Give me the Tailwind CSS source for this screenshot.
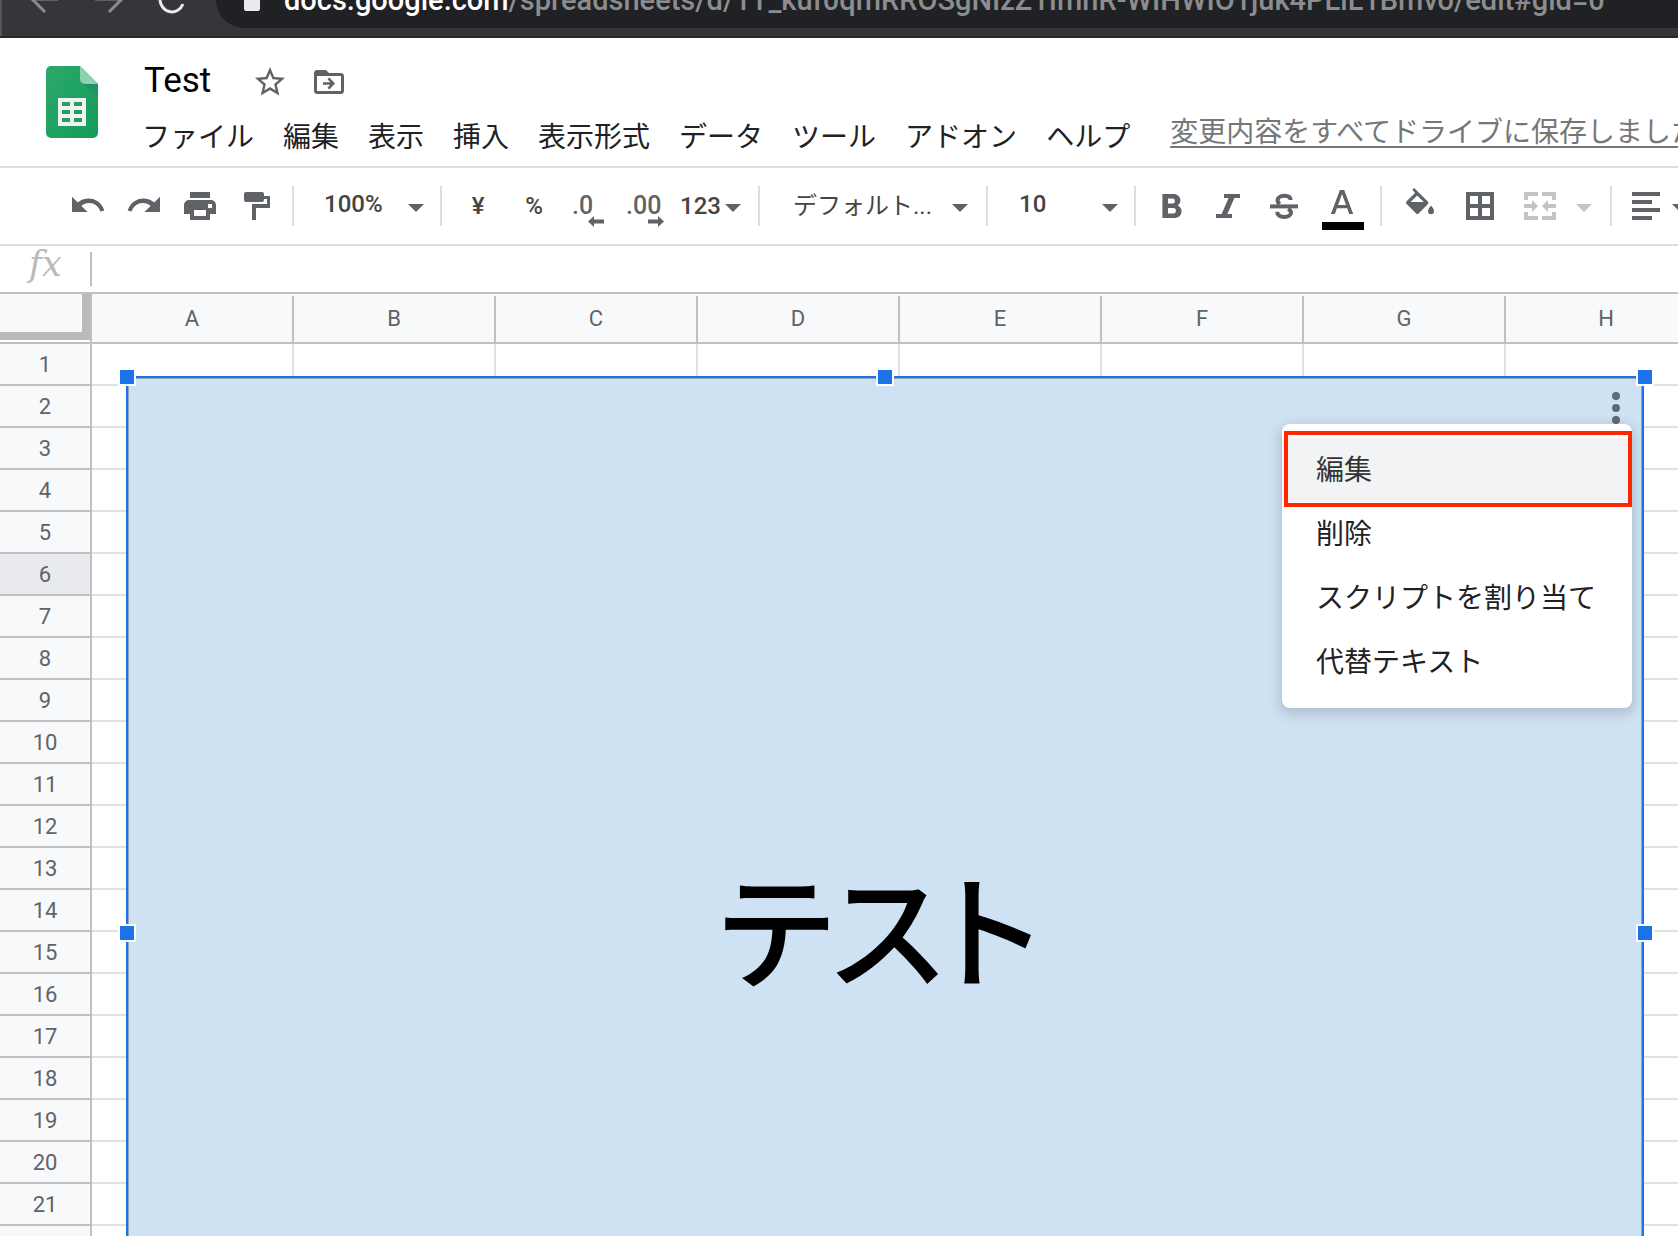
<!DOCTYPE html>
<html lang="ja">
<head>
<meta charset="utf-8">
<title>Test - スプレッドシート</title>
<script src="https://cdn.jsdelivr.net/npm/@tailwindcss/browser@4"></script>
</head>
<body class="flex h-screen flex-col overflow-hidden bg-white font-[Roboto,'Noto_Sans_CJK_JP',sans-serif] text-[#202124]">

<!-- Browser address bar -->
<div class="flex h-[38px] shrink-0 items-start overflow-hidden border-b-2 border-[#28292a] bg-[#35363a]">
  <div class="flex h-9 w-[216px] shrink-0 items-start border-l-2 border-[#55565a]">
    <button type="button" aria-label="戻る" class="ml-[28px] h-4 w-8">
      <svg class="h-4 w-8" viewBox="0 0 32 16" fill="none" stroke="#8a8b8d" stroke-width="3"><path d="M28 -1H2M1 -2L15 12"/></svg>
    </button>
    <button type="button" aria-label="進む" class="ml-[32px] h-4 w-8">
      <svg class="h-4 w-8" viewBox="0 0 32 16" fill="none" stroke="#8a8b8d" stroke-width="3"><path d="M1 -1H27M29 -2L15 12"/></svg>
    </button>
    <button type="button" aria-label="再読み込み" class="ml-[30px] h-4 w-8">
      <svg class="h-4 w-8" viewBox="0 0 32 16" fill="none" stroke="#e8eaed" stroke-width="3"><path d="M4 -2A12 13 0 0 0 27 4"/></svg>
    </button>
  </div>
  <div class="flex h-7 grow items-start rounded-bl-[28px] bg-[#202124] pl-[28px]">
    <svg class="h-3 w-4 shrink-0" viewBox="0 0 16 12" fill="#e8eaed"><path d="M0 0H16V9a2 2 0 0 1-2 2H2a2 2 0 0 1-2-2z"/></svg>
    <p class="-mt-[16px] ml-[24px] whitespace-nowrap text-[29px] font-medium leading-8 text-[#8c8d8f]"><span class="text-white">docs.google.com</span>/spreadsheets/d/1T_kuf0qmRROSgNIzZ1ImnR-WIHWIO1juk4PLiL1Bmvo/edit#gid=0</p>
  </div>
</div>

<!-- Document header -->
<header class="flex h-[130px] shrink-0 overflow-hidden border-b-2 border-[#dadce0]">
  <a href="#" aria-label="スプレッドシート ホーム" class="ml-[46px] mt-[28px] h-[72px] w-[52px] shrink-0">
    <svg class="h-[72px] w-[52px]" viewBox="0 0 52 72">
      <defs>
        <linearGradient id="sheet" x1="0" y1="0" x2="1" y2="1"><stop offset="0" stop-color="#2ba96a"/><stop offset="1" stop-color="#149b5a"/></linearGradient>
        <linearGradient id="fold" x1="0" y1="0" x2="1" y2="1"><stop offset="0" stop-color="#1b8e63"/><stop offset="1" stop-color="#1b8e63" stop-opacity="0.4"/></linearGradient>
      </defs>
      <path fill="url(#sheet)" d="M5 0H34L52 18V67a5 5 0 0 1-5 5H5a5 5 0 0 1-5-5V5a5 5 0 0 1 5-5z"/>
      <path fill="url(#fold)" d="M36 17L52 30V18z"/>
      <path fill="#8ed1b1" d="M34 0L52 18H39a5 5 0 0 1-5-5z"/>
      <path fill="#f1f1f1" fill-rule="evenodd" d="M12 32H40V60H12zM16 36V40H24V36zM28 36V40H36V36zM16 44V48H24V44zM28 44V48H36V44zM16 52V56H24V52zM28 52V56H36V52z"/>
    </svg>
  </a>
  <div class="ml-[44px] shrink-0">
    <div class="flex items-start pt-[25px]">
      <input aria-label="ドキュメント名" value="Test" class="h-9 w-[110px] bg-transparent pl-[2px] text-[35px] leading-9 text-black outline-none">
      <button type="button" aria-label="スターを付ける" class="mt-px h-9 w-9"><svg class="h-9 w-9" viewBox="0 0 24 24" fill="#5f6368"><path d="M22 9.24l-7.19-.62L12 2 9.19 8.63 2 9.24l5.46 4.73L5.82 21 12 17.27 18.18 21l-1.63-7.03L22 9.24zM12 15.4l-3.76 2.27 1-4.28-3.32-2.88 4.38-.38L12 6.1l1.71 4.04 4.38.38-3.32 2.88 1 4.28L12 15.4z"/></svg></button>
      <button type="button" aria-label="移動" class="ml-[23px] mt-px h-9 w-9"><svg class="h-9 w-9" viewBox="0 0 24 24" fill="#5f6368"><path d="M20 6h-8l-2-2H4c-1.100 0-2 .9-2 2v12c0 1.100.9 2 2 2h16c1.100 0 2-.9 2-2V8c0-1.100-.9-2-2-2zm0 12H4V8h16v10zM12.200 9l3.800 4-3.800 4-1.200-1.200 1.800-1.900H8v-1.800h4.800L11 10.200z"/></svg></button>
    </div>
    <nav class="mt-[18px] flex gap-[29px] whitespace-nowrap text-[28px] leading-10">
      <button type="button">ファイル</button>
      <button type="button">編集</button>
      <button type="button">表示</button>
      <button type="button">挿入</button>
      <button type="button">表示形式</button>
      <button type="button">データ</button>
      <button type="button">ツール</button>
      <button type="button">アドオン</button>
      <button type="button">ヘルプ</button>
    </nav>
  </div>
  <a href="#" class="ml-[40px] mt-[75px] h-10 whitespace-nowrap text-[28px] leading-10 text-[#777] underline decoration-2 underline-offset-[4px]">変更内容をすべてドライブに保存しました</a>
</header>

<!-- Toolbar -->
<div role="toolbar" class="flex h-[78px] shrink-0 items-center overflow-hidden border-b-2 border-[#dadce0] pl-[60px] text-[24px] font-medium leading-8 text-[#444] *:shrink-0">
  <button type="button" aria-label="元に戻す" class="flex h-14 w-14 items-center justify-center"><svg class="h-9 w-9" viewBox="0 0 18 18" fill="#5f6368"><path d="M9.300 5.200c-2.100 0-4 .8-5.400 2L1 4.400V12h7.800L5.700 9C6.700 8.100 8 7.500 9.500 7.500c2.600 0 4.900 1.700 5.700 4.300L17.200 11.200C16 7.600 12.900 5.200 9.300 5.200z"/></svg></button>
  <button type="button" aria-label="やり直し" class="flex h-14 w-14 items-center justify-center"><svg class="h-9 w-9" viewBox="0 0 18 18" fill="#5f6368"><path d="M8.700 5.200c2.100 0 4 .8 5.400 2L17 4.400V12H9.200L12.300 9C11.300 8.100 10 7.500 8.500 7.500c-2.600 0-4.900 1.700-5.700 4.300L.8 11.200C2 7.600 5.100 5.200 8.700 5.200z"/></svg></button>
  <button type="button" aria-label="印刷" class="flex h-14 w-14 items-center justify-center"><svg class="h-9 w-9" viewBox="0 0 18 18" fill="#5f6368"><path fill-rule="evenodd" d="M4 2H14V5H4zM3.500 6h11A2.500 2.500 0 0 1 17 8.500V13H14V16H4V13H1V8.500A2.500 2.500 0 0 1 3.500 6zM6 11V14H12V11zM13 8V10H15V8z"/></svg></button>
  <button type="button" aria-label="書式を貼り付け" class="flex h-14 w-14 items-center justify-center"><svg class="h-9 w-9" viewBox="0 0 18 18" fill="#5f6368"><path d="M4 2h8a1 1 0 0 1 1 1V4H16V10H9V16H7V8H14.500V5.500H13V6a1 1 0 0 1-1 1H4a1 1 0 0 1-1-1V3a1 1 0 0 1 1-1z"/></svg></button>
  <div class="ml-2 h-10 w-[2px] bg-[#dadce0]"></div>
  <div class="grid w-[146px] items-center">
    <select aria-label="ズーム" class="col-start-1 row-start-1 mb-1 appearance-none pl-[30px] outline-none"><option>100%</option></select>
    <svg class="pointer-events-none col-start-1 row-start-1 mr-4 mt-1 h-2 w-4 justify-self-end" viewBox="0 0 16 8" fill="#5f6368"><path d="M0 0H16L8 8z"/></svg>
  </div>
  <div class="h-10 w-[2px] bg-[#dadce0]"></div>
  <button type="button" class="ml-2 w-14">¥</button>
  <button type="button" class="w-14">%</button>
  <button type="button" aria-label="小数点以下の桁数を減らす" class="h-14 w-14"><svg class="h-14 w-14" viewBox="0 0 56 56" fill="#5f6368"><text x="10" y="36" font-size="25">.0</text><path d="M26 43.500L32 38V41.500H42V45.500H32V49z"/></svg></button>
  <button type="button" aria-label="小数点以下の桁数を増やす" class="h-14 w-14"><svg class="h-14 w-14" viewBox="0 0 56 56" fill="#5f6368"><text x="8" y="36" font-size="25">.00</text><path d="M46 43.500L40 38V41.500H30V45.500H40V49z"/></svg></button>
  <button type="button" aria-label="表示形式の詳細" class="flex w-[84px] items-center gap-1 pl-[6px]">123<svg class="mt-1 h-2 w-4" viewBox="0 0 16 8" fill="#5f6368"><path d="M0 0H16L8 8z"/></svg></button>
  <div class="h-10 w-[2px] bg-[#dadce0]"></div>
  <div class="grid w-[226px] items-center">
    <select aria-label="フォント" class="col-start-1 row-start-1 appearance-none pl-[33px] font-normal outline-none"><option>デフォルト...</option></select>
    <svg class="pointer-events-none col-start-1 row-start-1 mr-[18px] mt-1 h-2 w-4 justify-self-end" viewBox="0 0 16 8" fill="#5f6368"><path d="M0 0H16L8 8z"/></svg>
  </div>
  <div class="h-10 w-[2px] bg-[#dadce0]"></div>
  <div class="grid w-[146px] items-center">
    <select aria-label="フォントサイズ" class="col-start-1 row-start-1 mb-1 appearance-none pl-[31px] outline-none"><option>10</option></select>
    <svg class="pointer-events-none col-start-1 row-start-1 mr-4 mt-1 h-2 w-4 justify-self-end" viewBox="0 0 16 8" fill="#5f6368"><path d="M0 0H16L8 8z"/></svg>
  </div>
  <div class="h-10 w-[2px] bg-[#dadce0]"></div>
  <button type="button" aria-label="太字" class="ml-2 flex h-14 w-14 items-center justify-center"><svg class="h-9 w-9" viewBox="0 0 18 18" fill="#5f6368"><path fill-rule="evenodd" d="M4.200 3H9.500C11.700 3 13.200 4.300 13.200 6.200C13.200 7.300 12.600 8.200 11.800 8.700C13 9.200 13.800 10.200 13.800 11.500C13.800 13.700 12.200 15 9.900 15H4.200zM7 5.300V7.800H9.200A1.250 1.250 0 0 0 9.200 5.300zM7 10V12.700H9.600A1.350 1.350 0 0 0 9.600 10z"/></svg></button>
  <button type="button" aria-label="斜体" class="flex h-14 w-14 items-center justify-center"><svg class="h-9 w-9" viewBox="0 0 18 18" fill="#5f6368"><path d="M7 3H15V5H12.200L8.700 13H11V15H3V13H5.800L9.300 5H7z"/></svg></button>
  <button type="button" aria-label="取り消し線" class="flex h-14 w-14 items-center justify-center"><svg class="h-9 w-9" viewBox="0 0 18 18" fill="none" stroke="#5f6368" stroke-width="2"><path d="M12.300 6C12.300 4.600 11 3.900 9.100 3.900C7.200 3.900 5.800 4.800 5.800 6.200C5.800 7 6.200 7.500 7 8M11 10.500C12 11 12.500 11.500 12.500 12.300C12.500 13.700 11 14.500 9.200 14.500C7 14.500 5.600 13.500 5.600 11.900" /><path d="M2 9.200H16"/></svg></button>
  <button type="button" aria-label="テキストの色" class="flex h-14 w-14 items-center justify-center"><svg class="h-12 w-12" viewBox="0 0 48 48" fill="#5f6368"><path fill-rule="evenodd" d="M23.900 8H28.200L37.200 32H33.200L31.200 26.300H20.900L18.900 32H14.900zM22.100 22.900H30L26 12z"/><path fill="#000" d="M6 40H48V48H6z"/></svg></button>
  <div class="ml-[12px] h-10 w-[2px] bg-[#dadce0]"></div>
  <button type="button" aria-label="塗りつぶしの色" class="ml-2 flex h-14 w-[60px] items-center justify-center"><svg class="h-9 w-9" viewBox="0 0 18 18" fill="#5f6368"><path fill-rule="evenodd" d="M5.200 .9L6.100 0L13 6.900a.8.8 0 0 1 0 1.100L8.300 12.700a.9.9 0 0 1-1.200 0L2.200 7.900a.8.8 0 0 1 0-1.100L6.500 2.500zM7.600 3.700L4.300 7H10.900z"/><path d="M14.500 8.800C14.500 8.800 16 10.500 16 11.600a1.500 1.500 0 0 1-3 0C13 10.500 14.500 8.800 14.500 8.800z"/></svg></button>
  <button type="button" aria-label="枠線" class="flex h-14 w-[60px] items-center justify-center"><svg class="h-9 w-9" viewBox="0 0 18 18" fill="#5f6368"><path fill-rule="evenodd" d="M2 2H16V16H2zM4 4V8H8V4zM10 4V8H14V4zM4 10V14H8V10zM10 10V14H14V10z"/></svg></button>
  <button type="button" aria-label="セルを結合" disabled class="flex h-14 w-[60px] items-center justify-center"><svg class="h-9 w-9" viewBox="0 0 18 18" fill="#c3c4c5"><path d="M1 2H8V4H3V6H1zM10 2H17V6H15V4H10zM1 12H3V14H8V16H1zM15 12H17V16H10V14H15zM1 8H5V6L8 9L5 12V10H1zM17 8H13V6L10 9L13 12V10H17z"/></svg></button>
  <button type="button" aria-label="結合の種類" disabled class="flex h-14 w-7 items-center justify-center"><svg class="mt-1 h-2 w-4" viewBox="0 0 16 8" fill="#c3c4c5"><path d="M0 0H16L8 8z"/></svg></button>
  <div class="ml-[12px] h-10 w-[2px] bg-[#dadce0]"></div>
  <button type="button" aria-label="水平方向の配置" class="ml-4 flex h-14 items-center gap-2"><svg class="h-9 w-9" viewBox="0 0 18 18" fill="#5f6368"><path d="M2 2H16V4H2zM2 6H12V8H2zM2 10H16V12H2zM2 14H12V16H2z"/></svg><svg class="mt-1 h-2 w-4" viewBox="0 0 16 8" fill="#5f6368"><path d="M0 0H16L8 8z"/></svg></button>
</div>

<!-- Formula bar -->
<div class="flex h-[48px] shrink-0 border-b-2 border-[#c0c0c0]">
  <label for="formula" class="w-[90px] shrink-0 pl-[29px] font-['DejaVu_Serif','Liberation_Serif',serif] text-[35px] italic leading-9 text-[#b8babc]">fx</label>
  <div class="mt-[6px] h-[34px] w-[2px] shrink-0 bg-[#c0c0c0]"></div>
  <input id="formula" class="grow px-3 text-[24px] outline-none">
</div>

<!-- Sheet -->
<main class="relative min-h-0 grow overflow-hidden">
  <table class="w-[1708px] table-fixed border-separate border-spacing-0 text-[22px] text-[#5f6368]">
    <thead>
      <tr id="columns" class="h-[50px]">
        <th class="w-[92px] border-b-2 border-[#c0c0c0] bg-white p-0 align-top"><div class="h-[46px] border-b-8 border-r-[10px] border-[#bababa] bg-[#f8f9fa]"></div></th>
      </tr>
    </thead>
    <tbody id="rows"></tbody>
  </table>

  <!-- Selected drawing -->
  <div class="absolute left-[126px] top-[82px] flex h-[1114px] w-[1518px] justify-center border-2 border-[#1a73e8] bg-[#cfe2f3] pr-3 shadow-[inset_0_0_0_1px_#8fa6bb]">
    <p class="mt-[457px] font-['Noto_Sans_CJK_JP',sans-serif] text-[124px] font-medium leading-[180px] text-black [font-feature-settings:'palt']">テスト</p>
    <span class="absolute -left-[10px] -top-[10px] h-[18px] w-[18px] border-2 border-white bg-[#1a73e8]"></span>
    <span class="absolute -top-[10px] left-[748px] h-[18px] w-[18px] border-2 border-white bg-[#1a73e8]"></span>
    <span class="absolute -right-[12px] -top-[10px] h-[18px] w-[18px] border-2 border-white bg-[#1a73e8]"></span>
    <span class="absolute -left-[10px] top-[546px] h-[18px] w-[18px] border-2 border-white bg-[#1a73e8]"></span>
    <span class="absolute -right-[12px] top-[546px] h-[18px] w-[18px] border-2 border-white bg-[#1a73e8]"></span>
    <button type="button" aria-label="その他の操作" class="absolute right-[18px] top-[12px] h-9 w-4"><svg class="h-9 w-4" viewBox="0 0 16 36" fill="#5f6a73"><circle cx="8" cy="6" r="4"/><circle cx="8" cy="18" r="4"/><circle cx="8" cy="30" r="4"/></svg></button>
  </div>

  <!-- Drawing menu -->
  <div role="menu" class="absolute left-[1282px] top-[130px] w-[350px] rounded-lg bg-white py-[14px] text-[28px] shadow-[0_4px_12px_2px_rgba(60,64,67,0.22)]">
    <button type="button" role="menuitem" class="block h-16 w-full bg-[#f1f3f4] pl-[34px] pt-[2px] text-left text-[#333]">編集</button>
    <button type="button" role="menuitem" class="block h-16 w-full pl-[34px] pt-[2px] text-left">削除</button>
    <button type="button" role="menuitem" class="block h-16 w-full whitespace-nowrap pl-[34px] pt-[2px] text-left">スクリプトを割り当て</button>
    <button type="button" role="menuitem" class="block h-16 w-full pl-[34px] pt-[2px] text-left">代替テキスト</button>
    <span class="pointer-events-none absolute left-[2px] right-0 top-[7px] h-[76px] border-4 border-[#ff2600]"></span>
  </div>
</main>

<script>
  const letters = ['A', 'B', 'C', 'D', 'E', 'F', 'G', 'H'];
  document.getElementById('columns').insertAdjacentHTML('beforeend', letters.map(l =>
    `<th class="border-b-2 border-[#c0c0c0] bg-[#f8f9fa] p-0 pt-[2px] font-normal"><div class="-ml-[2px] h-[46px] border-x-2 border-[#c0c0c0] leading-[46px]">${l}</div></th>`).join(''));
  document.getElementById('rows').innerHTML = Array.from({length: 22}, (_, i) => {
    const head = i === 5 ? 'bg-[#e8eaed]' : 'bg-[#f8f9fa]';
    return `<tr class="h-[42px]"><th class="border-b-2 border-r-2 border-[#c0c0c0] p-0 pt-[2px] font-normal leading-[38px] ${head}">${i + 1}</th>` +
      letters.map(() => '<td class="border-b-2 border-r-2 border-[#e2e2e2] p-0"></td>').join('') + '</tr>';
  }).join('');
</script>
</body>
</html>
